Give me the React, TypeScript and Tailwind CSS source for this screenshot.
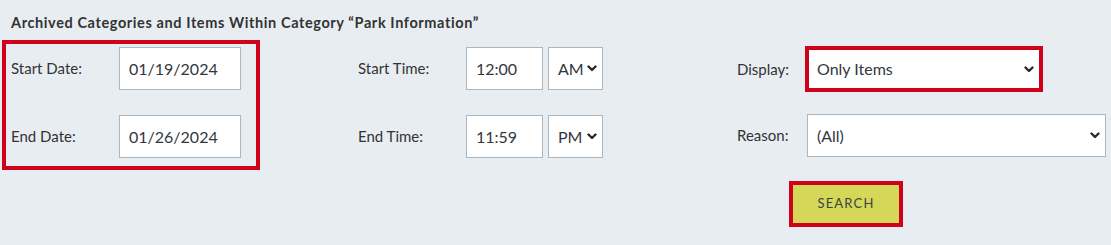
import React from 'react';

function Chevron() {
  return (
    <svg width="10" height="7" viewBox="0 0 10 7" className="shrink-0">
      <path d="M1.5 1.5l3.5 3.5 3.5-3.5" fill="none" stroke="#2b2b2b" strokeWidth="2.4" strokeLinecap="round" strokeLinejoin="round" />
    </svg>
  );
}

function TextBox({ value, width }: { value: string; width: string }) {
  return (
    <div className={`${width} h-[43px] bg-white border border-[#a9b6c4] flex items-center pl-[9px] text-[16px] text-[#333740]`}>
      {value}
    </div>
  );
}

function SelectBox({ value, className }: { value: string; className: string }) {
  return (
    <div className={`bg-white flex items-center justify-between text-[16px] text-[#333740] ${className}`}>
      <span>{value}</span>
      <Chevron />
    </div>
  );
}

export default function App() {
  return (
    <div className="w-[1111px] h-[245px] overflow-hidden bg-[#e8edf2] font-['Lato','Liberation_Sans',sans-serif] text-[#333]">
      {/* Heading */}
      <h1 className="pt-[13px] pl-[11px] text-[14.5px] font-bold leading-[20px] tracking-[0.6px] text-[#333]">
        Archived Categories and Items Within Category “Park Information”
      </h1>

      <div className="flex mt-[7px]">
        {/* Dates, outlined */}
        <div className="ml-[2px] w-[258px] h-[130px] border-4 border-[#d0021b] pl-[5px] pt-[3px] flex flex-col gap-[25px]">
          <div className="flex items-center">
            <label className="w-[108px] text-[15px]">Start Date:</label>
            <TextBox value="01/19/2024" width="w-[122px]" />
          </div>
          <div className="flex items-center">
            <label className="w-[108px] text-[15px]">End Date:</label>
            <TextBox value="01/26/2024" width="w-[122px]" />
          </div>
        </div>

        {/* Times */}
        <div className="ml-[98px] pt-[7px] flex flex-col gap-[25px]">
          <div className="flex items-center">
            <label className="w-[108px] text-[15px]">Start Time:</label>
            <TextBox value="12:00" width="w-[77px]" />
            <SelectBox value="AM" className="ml-[5px] w-[55px] h-[43px] border border-[#a9b6c4] pl-[9px] pr-[5px]" />
          </div>
          <div className="flex items-center">
            <label className="w-[108px] text-[15px]">End Time:</label>
            <TextBox value="11:59" width="w-[77px]" />
            <SelectBox value="PM" className="ml-[5px] w-[55px] h-[43px] border border-[#a9b6c4] pl-[9px] pr-[5px]" />
          </div>
        </div>

        {/* Display / reason / search */}
        <div className="ml-[134px] pt-[6px] flex flex-col">
          <div className="flex items-center h-[46px]">
            <label className="w-[68px] text-[15px]">Display:</label>
            <SelectBox value="Only Items" className="w-[238px] h-[46px] border-4 border-[#d0021b] pl-[8px] pr-[5px]" />
          </div>
          <div className="flex items-center mt-[22px]">
            <label className="w-[70px] text-[15px]">Reason:</label>
            <SelectBox value="(All)" className="w-[299px] h-[43px] border border-[#a9b6c4] pl-[9px] pr-[5px]" />
          </div>
          <button className="ml-[52px] mt-[24px] w-[114px] h-[46px] border-4 border-[#d0021b] bg-[#d4d757] text-[13px] tracking-[1.2px] text-[#3b4444]">
            SEARCH
          </button>
        </div>
      </div>
    </div>
  );
}
